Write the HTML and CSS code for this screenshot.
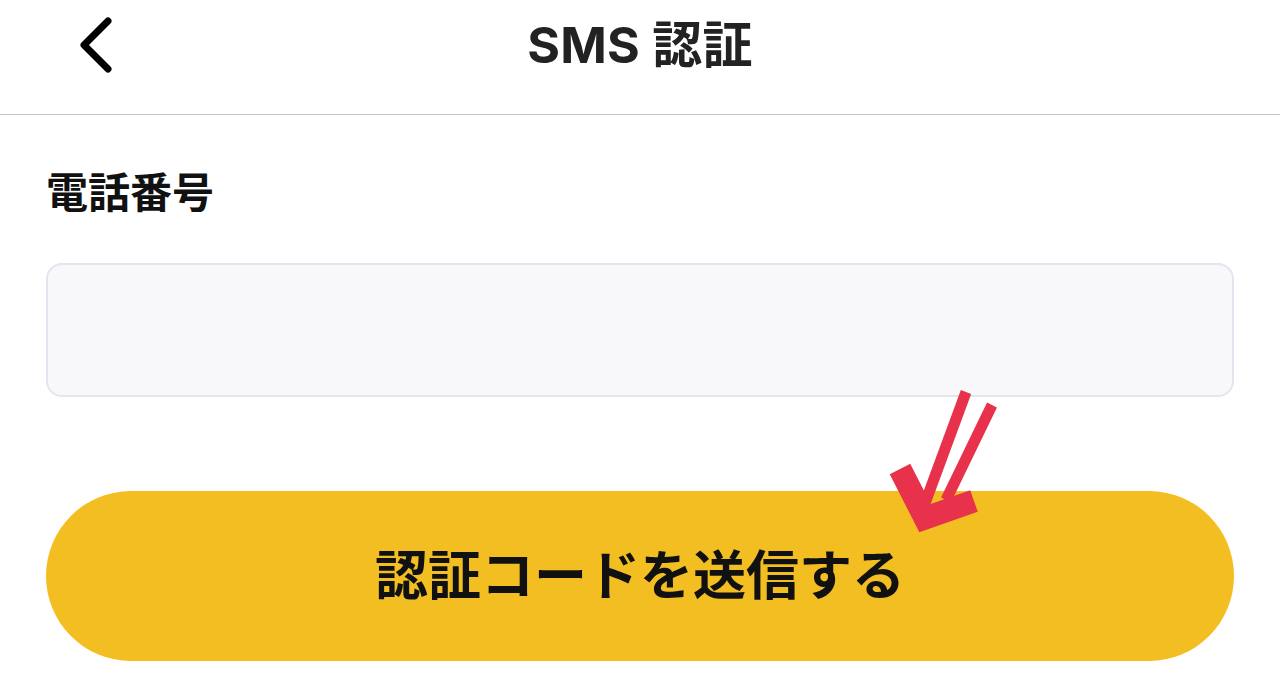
FILE: index.html
```html
<!DOCTYPE html>
<html lang="ja">
<head>
<meta charset="utf-8">
<title>SMS認証</title>
<link rel="stylesheet" href="styles.css">
</head>
<body>
<header class="header">
  <div class="back">
    <svg class="back-icon" width="40" height="56" viewBox="0 0 40 56">
      <polyline points="32,4 8,28 32,52" fill="none" stroke="#000" stroke-width="7" stroke-linecap="round" stroke-linejoin="round"/>
    </svg>
  </div>
  <h1 class="title">SMS 認証</h1>
  <div></div>
</header>
<main class="content">
  <label class="label">電話番号</label>
  <div class="input"></div>
  <button class="submit">認証コードを送信する</button>
</main>
<svg class="annotation" width="1280" height="674" viewBox="0 0 1280 674">
  <g stroke="#e8314b" fill="none">
    <line x1="966" y1="392" x2="924" y2="506" stroke-width="11"/>
    <line x1="992" y1="405" x2="946" y2="500" stroke-width="11"/>
    <polyline points="900,469 925,518 974,501" stroke-width="23" stroke-linejoin="miter"/>
  </g>
</svg>
</body>
</html>
```

FILE: styles.css
```css
html, body {
  margin: 0;
  padding: 0;
  background: #ffffff;
}
body {
  width: 1280px;
  height: 674px;
  overflow: hidden;
  position: relative;
  font-family: Inter, "Noto Sans CJK JP", sans-serif;
  color: #1a1a1a;
}
.header {
  height: 115px;
  box-sizing: border-box;
  padding-bottom: 24px;
  border-bottom: 1px solid #c8c8c8;
  display: grid;
  grid-template-columns: 1fr auto 1fr;
  align-items: center;
}
.back {
  padding-left: 76px;
  display: flex;
  align-items: center;
}
.back-icon {
  display: block;
}
.title {
  margin: 0;
  font-size: 50px;
  font-weight: 700;
  line-height: 60px;
  color: #222222;
  letter-spacing: 0.3px;
}
.content {
  padding: 0 46px;
  display: flex;
  flex-direction: column;
}
.label {
  margin-top: 50px;
  font-family: "Noto Sans CJK JP", sans-serif;
  font-size: 42px;
  font-weight: 700;
  line-height: 50px;
  color: #111111;
}
.input {
  margin-top: 48px;
  height: 134px;
  box-sizing: border-box;
  border: 2.5px solid #e2e6ee;
  background: #f8f8fa;
  border-radius: 16px;
}
.submit {
  margin-top: 94px;
  height: 170px;
  border: none;
  border-radius: 85px;
  background: #f2be22;
  font-family: "Noto Sans CJK JP", sans-serif;
  font-size: 53px;
  font-weight: 700;
  color: #111111;
  padding: 0 0 8px 0;
  cursor: pointer;
}
.annotation {
  position: absolute;
  left: 0;
  top: 0;
  pointer-events: none;
}
```
